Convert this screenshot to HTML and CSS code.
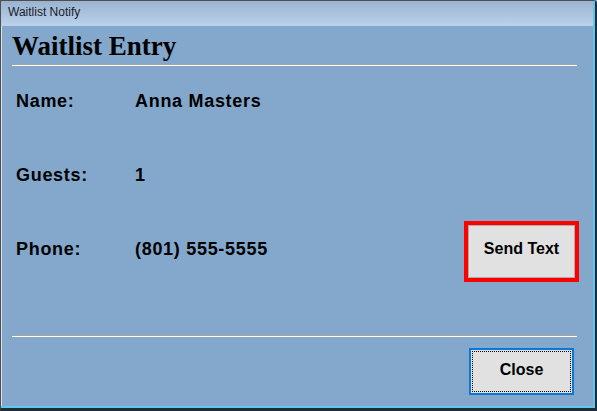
FILE: index.html
```html
<!DOCTYPE html>
<html>
<head>
<meta charset="utf-8">
<link rel="stylesheet" href="styles.css">
</head>
<body>
<div class="window">
  <div class="frame">
    <div class="titlebar">Waitlist Notify</div>
    <div class="client">
      <h1 class="heading">Waitlist Entry</h1>
      <div class="sep"></div>
      <div class="row row-name">
        <span class="label">Name:</span>
        <span class="value">Anna Masters</span>
      </div>
      <div class="row row-guests">
        <span class="label">Guests:</span>
        <span class="value">1</span>
      </div>
      <div class="row row-phone">
        <span class="label">Phone:</span>
        <span class="value">(801) 555-5555</span>
        <div class="send-frame"><button class="btn send">Send Text</button></div>
      </div>
      <div class="sep sep-bottom"></div>
      <div class="footer">
        <button class="btn close">Close</button>
      </div>
    </div>
  </div>
</div>
</body>
</html>
```

FILE: styles.css
```css
html, body {
  margin: 0;
  padding: 0;
  background: #83a8cc;
}
.window {
  width: 597px;
  height: 411px;
  box-sizing: border-box;
  border-top: 1px solid #4e4e4e;
  border-left: 1px solid #4e4e4e;
  border-right: 2px solid #1f2b36;
  border-bottom: 3px solid #1f2b36;
  border-top-right-radius: 4px;
}
.frame {
  height: 100%;
  box-sizing: border-box;
  border-right: 2px solid #5fc6ee;
  border-bottom: 2px solid #5fc6ee;
  display: flex;
  flex-direction: column;
}
.titlebar {
  height: 25px;
  box-sizing: border-box;
  padding: 4px 0 0 7px;
  font-family: "Liberation Sans", Arial, sans-serif;
  font-size: 12px;
  line-height: 15px;
  color: #1b1b2c;
  background: linear-gradient(to bottom, #9ab3cf, #bad2eb);
}
.client {
  flex: 1;
  background: #83a8cc;
  border-left: 1px solid #d6e3f0;
  padding: 0 16px 0 10px;
  display: flex;
  flex-direction: column;
  font-family: "Liberation Sans", Arial, sans-serif;
  color: #000;
}
.heading {
  margin: 5px 0 0 0;
  font-family: "Liberation Serif", "Times New Roman", serif;
  font-weight: bold;
  font-size: 27px;
  line-height: 30px;
  color: #000;
}
.sep {
  margin-top: 3px;
  height: 0;
  border-top: 1px solid #a3a3a3;
  border-bottom: 1px solid #ffffff;
}
.row {
  display: flex;
  align-items: center;
  padding-left: 4px;
  font-weight: bold;
  font-size: 18px;
  letter-spacing: 0.7px;
  line-height: 20px;
}
.label {
  width: 119px;
  flex: none;
}
.value {
  flex: 1;
}
.row-name {
  margin-top: 25px;
}
.row-guests {
  margin-top: 54px;
}
.row-phone {
  margin-top: 36px;
}
.row-phone .label,
.row-phone .value {
  margin-bottom: 5px;
}
.send-frame {
  border: 4px solid #ff0000;
  margin-right: -2px;
  display: flex;
}
.btn {
  font-family: "Liberation Sans", Arial, sans-serif;
  font-weight: bold;
  font-size: 16px;
  color: #000;
  background: #e1e1e1;
  margin: 0;
  padding: 0;
  cursor: default;
}
.send {
  width: 107px;
  height: 53px;
  border: 1px solid #adadad;
  padding-bottom: 6px;
}
.sep-bottom {
  margin-top: 53px;
}
.footer {
  display: flex;
  justify-content: flex-end;
  padding-top: 11px;
}
.close {
  position: relative;
  width: 105px;
  height: 47px;
  margin-right: 3px;
  border: 2px solid #0a78d7;
  padding-bottom: 4px;
}
.close::after {
  content: "";
  position: absolute;
  inset: 1px;
  border: 1px dotted #000;
}
```
